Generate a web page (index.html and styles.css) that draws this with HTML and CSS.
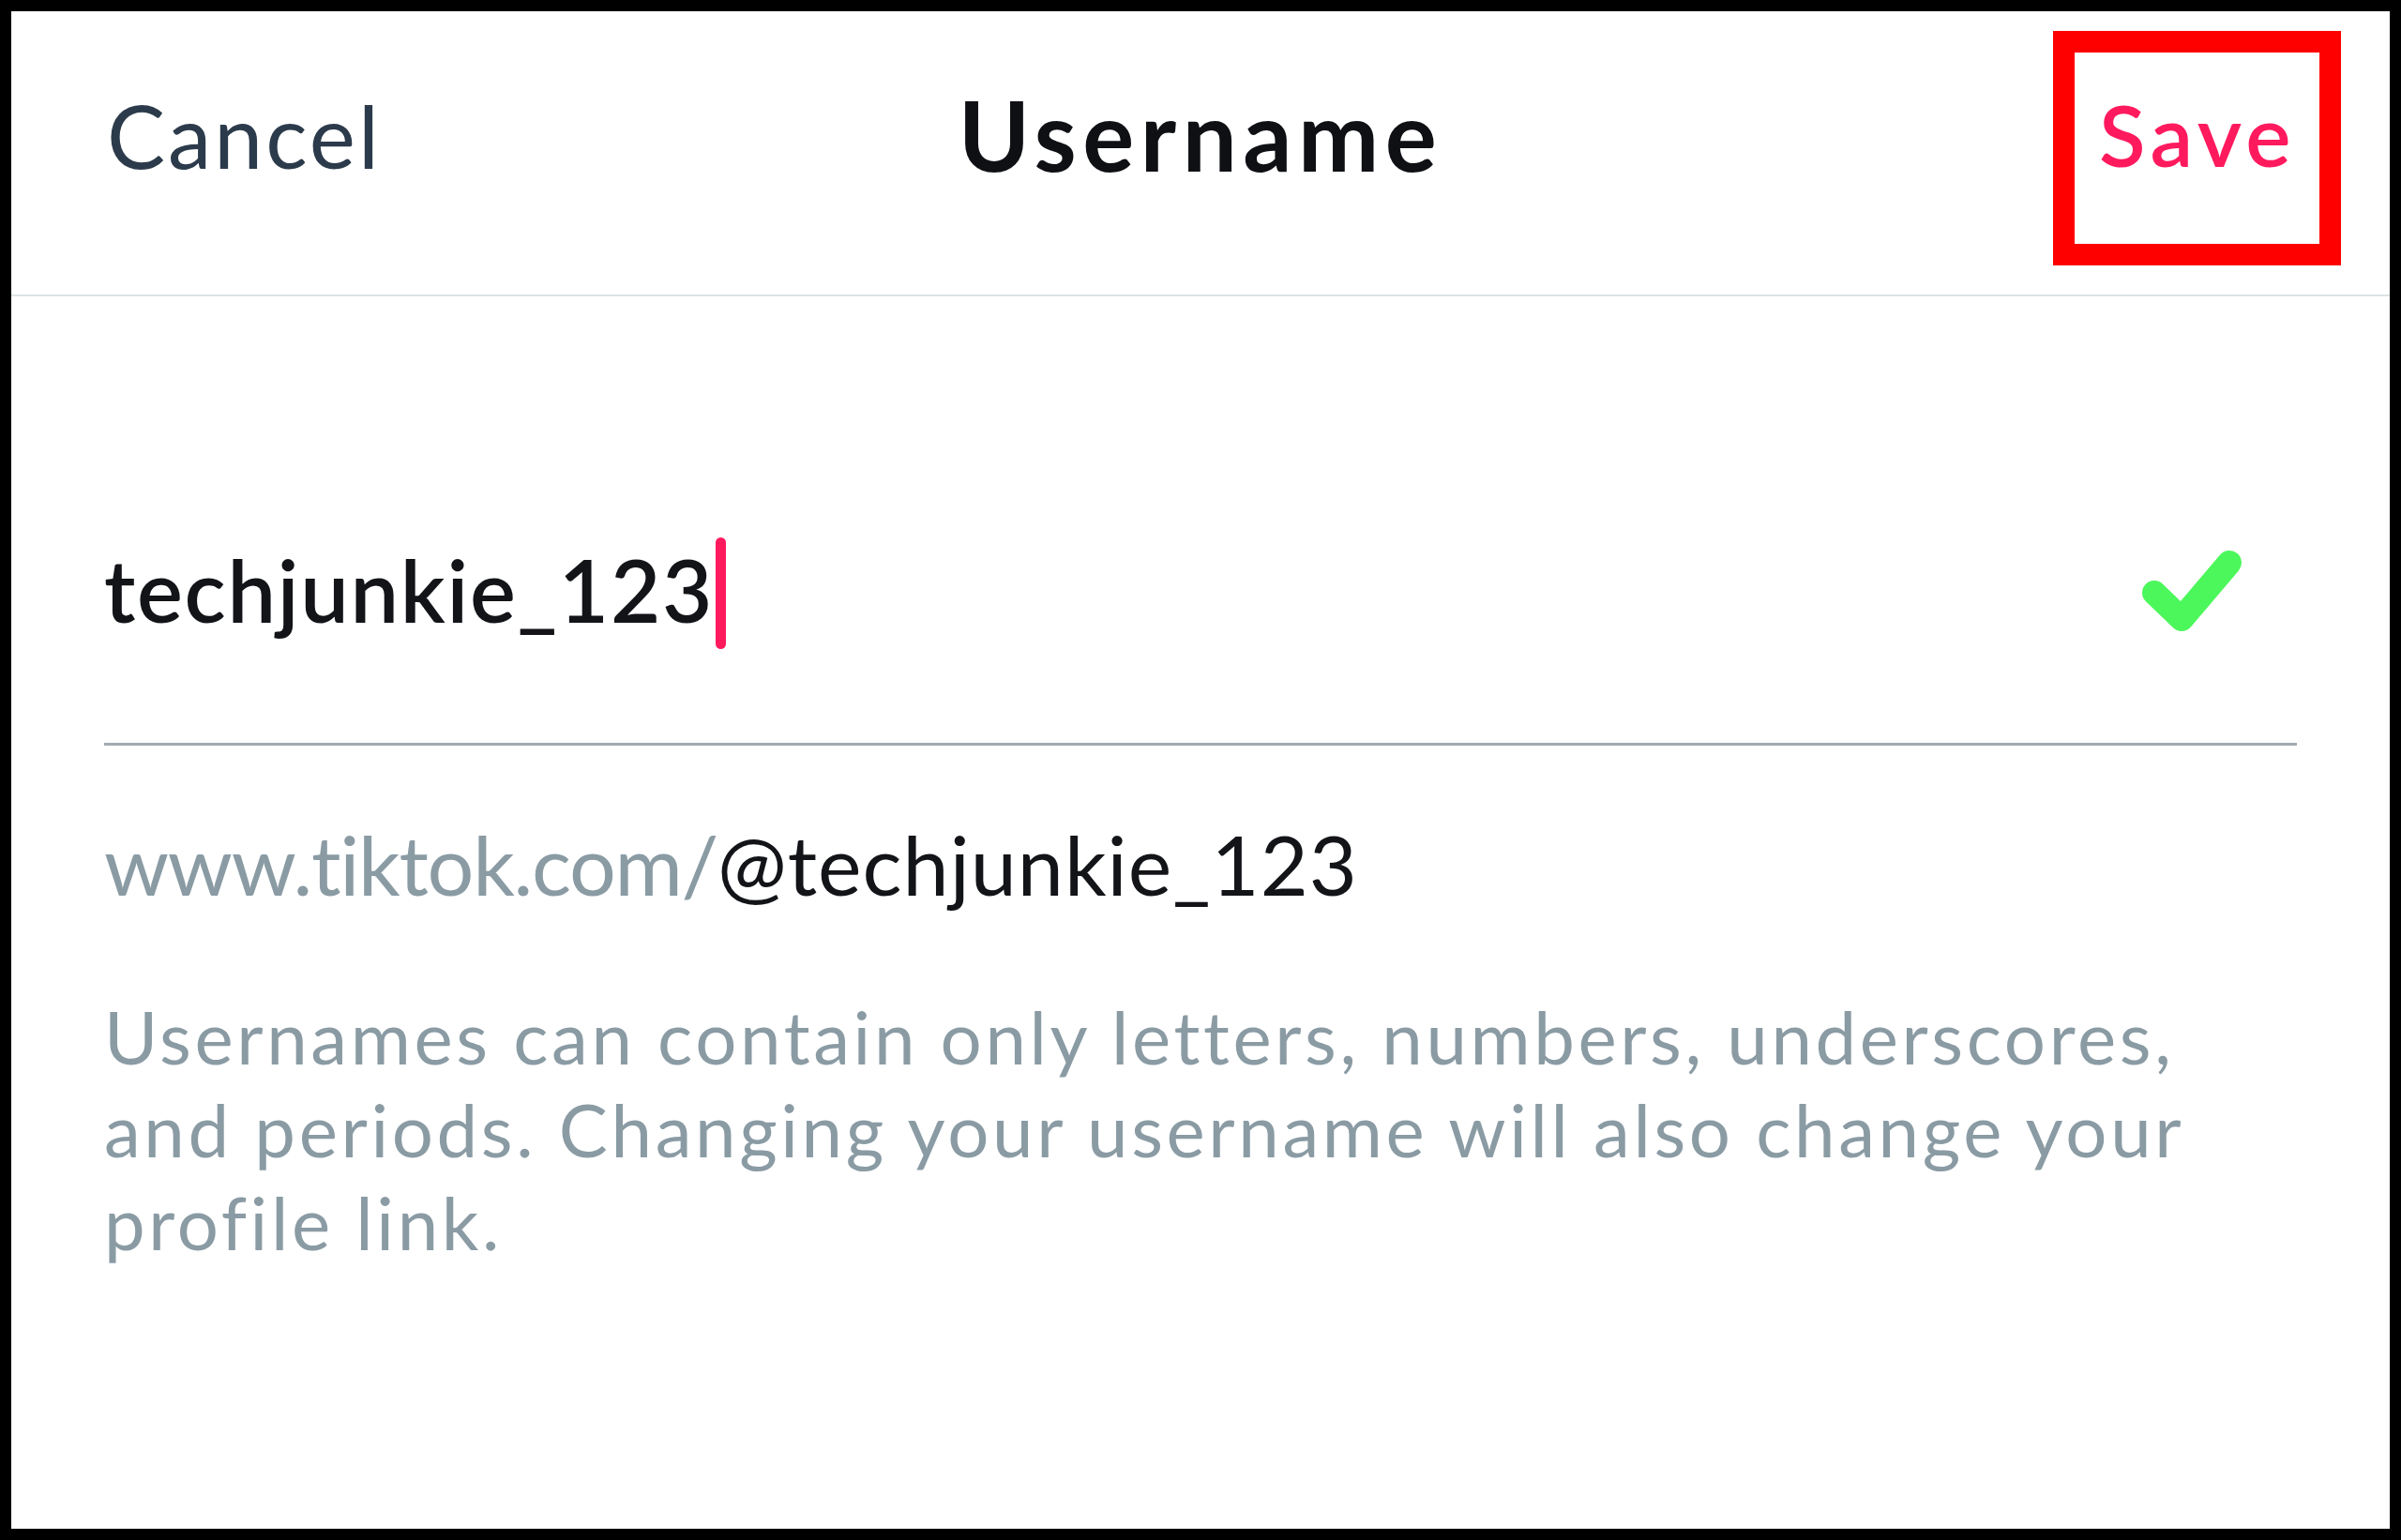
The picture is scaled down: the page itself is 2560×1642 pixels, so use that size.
FILE: index.html
```html
<!DOCTYPE html>
<html lang="en">
<head>
<meta charset="utf-8">
<title>Username</title>
<link rel="stylesheet" href="styles.css">
</head>
<body>
<div class="frame">
  <header class="topbar">
    <span class="cancel">Cancel</span>
    <h1 class="title">Username</h1>
    <span class="save-box"><span class="save">Save</span></span>
  </header>
  <main class="content">
    <div class="field">
      <span class="value">techjunkie_123</span><span class="caret"></span>
      <svg class="check" width="115" height="105" viewBox="0 0 115 105" aria-hidden="true">
        <polyline points="17,52 46,80 97,20" fill="none" stroke="#4cf75c" stroke-width="26" stroke-linecap="round" stroke-linejoin="round"/>
      </svg>
    </div>
    <p class="url"><span class="muted">www.tiktok.com/</span><span class="handle">@techjunkie_123</span></p>
    <p class="hint">Usernames can contain only letters, numbers, underscores, and periods. Changing your username will also change your profile link.</p>
  </main>
</div>
</body>
</html>
```
FILE: styles.css
```css
* { box-sizing: border-box; }
html, body { margin: 0; padding: 0; background: #000; }
body { font-family: "Lato", "Liberation Sans", sans-serif; }

.frame {
  width: 2560px;
  height: 1642px;
  border: 12px solid #000;
  background: #fff;
  display: flex;
  flex-direction: column;
}

.topbar {
  display: grid;
  grid-template-columns: 1fr auto 1fr;
  align-items: start;
  height: 304px;
  border-bottom: 2px solid #dde4e6;
  padding: 0 52px;
}

.cancel {
  justify-self: start;
  margin: 86px 0 0 50px;
  font-size: 93px;
  line-height: 1;
  letter-spacing: 3px;
  color: #2c3b4b;
}

.title {
  margin: 80px 0 0;
  font-size: 103px;
  line-height: 1;
  font-weight: 700;
  letter-spacing: 6.5px;
  color: #0e1014;
}

.save-box {
  justify-self: end;
  margin-top: 21px;
  width: 307px;
  height: 250px;
  border: 23px solid #ff0000;
  padding: 41px 0 0 26px;
}

.save {
  display: block;
  font-size: 91px;
  line-height: 1;
  font-weight: 600;
  letter-spacing: 5.5px;
  color: #ff1a5e;
}

.content {
  padding: 0 99px;
}

.field {
  display: flex;
  align-items: flex-start;
  padding-top: 257px;
  height: 479px;
  border-bottom: 3px solid #a2acaf;
}

.value {
  margin-top: 10px;
  font-size: 92px;
  line-height: 1;
  font-weight: 600;
  letter-spacing: 1.7px;
  color: #121418;
}

.caret {
  width: 11px;
  height: 119px;
  margin-left: 2px;
  border-radius: 6px;
  background: #ff1a5e;
}

.check {
  margin-left: auto;
  margin-top: 7px;
  margin-right: 54px;
}

.url {
  margin: 82px 0 0;
  font-size: 88px;
  line-height: 1;
  color: #121418;
}

.muted { color: #8a9ba4; letter-spacing: -1.3px; }
.handle { letter-spacing: 1px; }

.hint {
  margin: 91px 0 0;
  font-size: 78px;
  line-height: 99px;
  letter-spacing: 3.6px;
  color: #8a9ba4;
}
```
